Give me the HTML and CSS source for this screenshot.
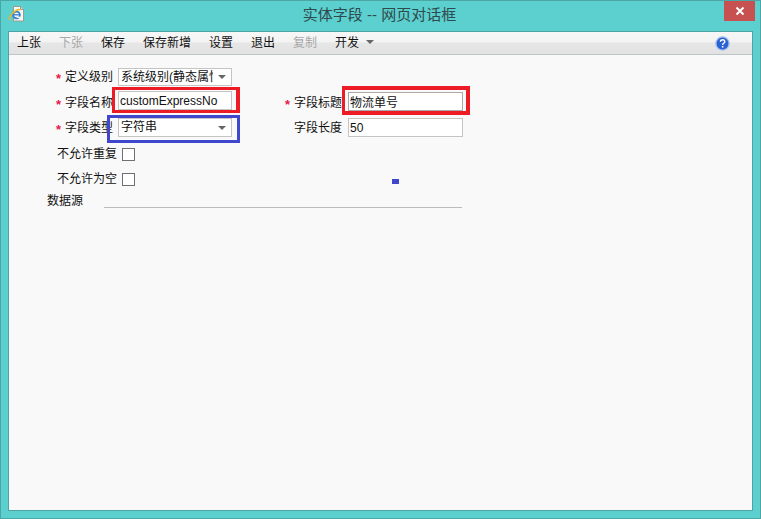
FILE: index.html
```html
<!DOCTYPE html>
<html lang="zh">
<head>
<meta charset="utf-8">
<title>实体字段 -- 网页对话框</title>
<link rel="stylesheet" href="styles.css">
</head>
<body>
<div class="window">
  <header class="titlebar">
    <svg class="app-icon" width="16" height="16" viewBox="0 0 16 16">
      <path d="M4.500 .5h7l3 3v11.500h-10z" fill="#f8f8f2" stroke="#9a9a92"/>
      <path d="M11.500 .5v3h3" fill="#dcdcd4" stroke="#9a9a92"/>
      <circle cx="7.500" cy="9" r="3.400" fill="none" stroke="#2f7fd6" stroke-width="1.800"/>
      <path d="M4.500 8.800h6" stroke="#2f7fd6" stroke-width="1.300"/>
      <path d="M8 11.300h4" stroke="#f8f8f2" stroke-width="1.300"/>
      <path d="M1 14c-1.500-1.500 1-5.500 3.500-7.500 2.500-2.300 5.500-3.500 6.500-2.500" fill="none" stroke="#f2b61c" stroke-width="1.500"/>
    </svg>
    <h1 class="title">实体字段 -- 网页对话框</h1>
    <button class="close" aria-label="关闭">
      <svg width="10" height="10" viewBox="0 0 10 10"><path d="M1.500 1.500l7 7M8.500 1.500l-7 7" stroke="#fff" stroke-width="2"/></svg>
    </button>
  </header>
  <main class="client">
    <nav class="toolbar">
      <span class="tool">上张</span>
      <span class="tool off">下张</span>
      <span class="tool">保存</span>
      <span class="tool">保存新增</span>
      <span class="tool">设置</span>
      <span class="tool">退出</span>
      <span class="tool off">复制</span>
      <span class="tool">开发<i class="caret tool-caret"></i></span>
      <svg class="help" width="15" height="15" viewBox="0 0 16 16">
        <circle cx="8" cy="8" r="7" fill="#2a62d4" stroke="#9dbcee" stroke-width="1.400"/>
        <path d="M5.800 6.200c0-3 4.600-3 4.600-.2 0 1.800-2.300 1.800-2.300 3.600" fill="none" stroke="#fff" stroke-width="1.500"/>
        <rect x="7.300" y="10.600" width="1.700" height="1.700" fill="#fff"/>
      </svg>
    </nav>
    <form class="form">
      <label class="label"><b class="req">*</b>定义级别</label>
      <div class="select select-sm"><span class="clip">系统级别(静态属性)</span><i class="caret"></i></div>
      <span></span><span></span>

      <label class="label label-low"><b class="req">*</b>字段名称</label>
      <input class="input" value="customExpressNo">
      <label class="label label-right label-low"><b class="req">*</b>字段标题</label>
      <input class="input input-right" value="物流单号">

      <label class="label label-mid"><b class="req">*</b>字段类型</label>
      <div class="select"><span class="clip">字符串</span><i class="caret"></i></div>
      <label class="label label-right label-mid">字段长度</label>
      <input class="input input-len" value="50">

      <label class="label label-check">不允许重复</label>
      <div class="check-cell"><i class="check"></i></div>
      <span></span><span></span>

      <label class="label label-check">不允许为空</label>
      <div class="check-cell"><i class="check"></i></div>
      <span></span><span></span>
    </form>
    <div class="source"><span class="source-label">数据源</span><span class="source-line"></span></div>
  </main>
  <i class="mark mark-red mark-name"></i>
  <i class="mark mark-red mark-title"></i>
  <i class="mark mark-blue mark-type"></i>
  <i class="dot"></i>
</div>
</body>
</html>
```
FILE: styles.css
```css
* { box-sizing: border-box; }
html, body { margin: 0; padding: 0; }
body {
  width: 761px;
  height: 519px;
  overflow: hidden;
  font: 12px/16px "Liberation Sans", "Noto Sans CJK SC", sans-serif;
  color: #111;
}
.window {
  position: relative;
  width: 761px;
  height: 519px;
  background: #5ccfcf;
  border: 1px solid #4da6a6;
  display: flex;
  flex-direction: column;
  padding: 0 7px 7px;
}
.titlebar {
  position: relative;
  height: 30px;
  flex: none;
  display: flex;
  align-items: center;
  justify-content: center;
}
.app-icon { position: absolute; left: 1px; top: 5px; }
.title {
  margin: 0;
  font-size: 15px;
  font-weight: 400;
  line-height: 20px;
  color: #2f4a4c;
  position: relative;
  left: -1px;
  top: -1px;
}
.close {
  position: absolute;
  right: -2px;
  top: 0;
  width: 31px;
  height: 20px;
  border: 0;
  padding: 0;
  background: #c75050;
  display: flex;
  align-items: center;
  justify-content: center;
}
.client {
  flex: 1;
  background: #f9f9f9;
  border: 1px solid #4fa3a5;
  display: flex;
  flex-direction: column;
  min-height: 0;
}
.toolbar {
  height: 23px;
  flex: none;
  display: flex;
  align-items: center;
  gap: 18px;
  padding: 0 8px;
  background: linear-gradient(#f7f7f7, #f3f3f3 45%, #e6e6e6 50%, #e2e2e2);
  border-bottom: 1px solid #bfc6c8;
}
.tool { white-space: nowrap; color: #111; }
.off { color: #a8a8a8; }
.caret {
  display: inline-block;
  width: 0;
  height: 0;
  border-style: solid;
  border-width: 4px 4px 0;
  border-color: #666 transparent transparent;
}
.tool-caret { margin-left: 7px; vertical-align: 3px; }
.help { margin-left: auto; margin-right: 14px; }
.form {
  display: grid;
  grid-template-columns: 104px 114px 106px 115px;
  grid-template-rows: 23px 27px 27px 25px 25px;
  column-gap: 5px;
  margin-top: 13px;
}
.form > :nth-child(4n+3) { margin-left: -5px; }
.label {
  text-align: right;
  white-space: nowrap;
  line-height: 18px;
}
.label-right { padding-right: 1px; }
.label-low { padding-top: 3px; }
.label-mid { padding-top: 1px; }
.req {
  color: #e8174a;
  font-weight: 700;
  font-size: 13px;
  margin-right: 3px;
  position: relative;
  top: 2px;
  left: -1px;
}
.label-check { line-height: 16px; padding-top: 1px; padding-right: 1px; margin-right: -5px; }
.select, .input {
  height: 19px;
  background: #fff;
  border: 1px solid #c4c4c4;
  font: inherit;
  color: #111;
}
.select {
  display: flex;
  align-items: center;
  padding: 0 5px 0 2px;
  gap: 5px;
  line-height: 17px;
}
.select-sm { height: 18px; }
.clip { flex: 1; overflow: hidden; white-space: nowrap; min-width: 0; }
.input { padding: 0 1px; width: 100%; outline: 0; }
.input-right { margin-top: 1px; border-color: #a9a9a9; }
.check-cell { padding: 3px 0 0 4px; }
.check {
  display: block;
  width: 13px;
  height: 13px;
  background: #fff;
  border: 1px solid #707070;
}
.source {
  display: flex;
  align-items: center;
  margin-top: -2px;
  padding-left: 38px;
}
.source-label { width: 57px; flex: none; }
.source-line {
  width: 358px;
  height: 1px;
  background: #bcbcbc;
  position: relative;
  top: 6px;
}
.mark { position: absolute; display: block; border: 3px solid; }
.mark-red { border-color: #ed1c24; }
.mark-blue { border-color: #3f48cc; }
.mark-name { left: 111px; top: 86px; width: 128px; height: 26px; border-width: 3px 4px 3px 3px; }
.mark-title { left: 341px; top: 85px; width: 128px; height: 29px; border-width: 4px 4px 4px 3px; }
.mark-type { left: 106px; top: 114px; width: 133px; height: 28px; }
.dot { position: absolute; left: 391px; top: 178px; width: 7px; height: 5px; background: #3f48cc; }
```
